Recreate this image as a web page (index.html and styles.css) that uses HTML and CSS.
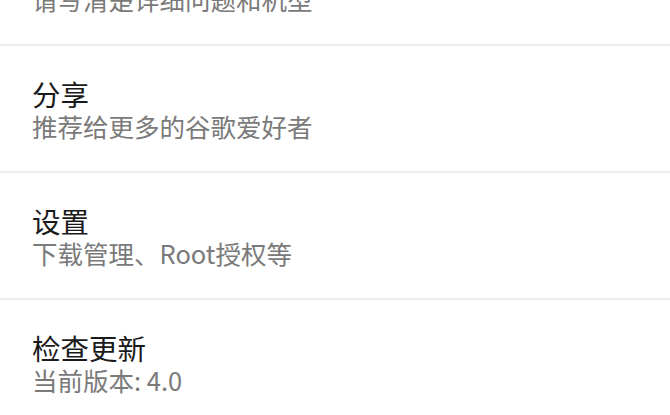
FILE: index.html
```html
<!DOCTYPE html>
<html>
    <head>
        <title>设置</title>
        <link rel="stylesheet" href="styles.css">
    </head>
    <body>
        <div class="list">
            <div class="row">
                <div class="title">反馈</div>
                <div class="sub">请写清楚详细问题和机型</div>
            </div>
            <div class="row">
                <div class="title">分享</div>
                <div class="sub">推荐给更多的谷歌爱好者</div>
            </div>
            <div class="row">
                <div class="title">设置</div>
                <div class="sub">下载管理、Root授权等</div>
            </div>
            <div class="row">
                <div class="title">检查更新</div>
                <div class="sub">当前版本: 4.0</div>
            </div>
        </div>
    </body>
</html>
```

FILE: styles.css
```css
html, body {
    margin: 0;
    background: #fff;
    overflow: hidden;
}

.list {
    margin-top: -81px;
    font-family: "Noto Sans CJK SC", "Noto Sans", sans-serif;
}

.row {
    padding: 30px 32px 30px;
    border-bottom: 2px solid #ededed;
}

.title {
    font-size: 28.5px;
    line-height: 35px;
    color: #1a1a1a;
}

.sub {
    font-size: 25.5px;
    line-height: 30px;
    color: #7a7a7a;
}
```
